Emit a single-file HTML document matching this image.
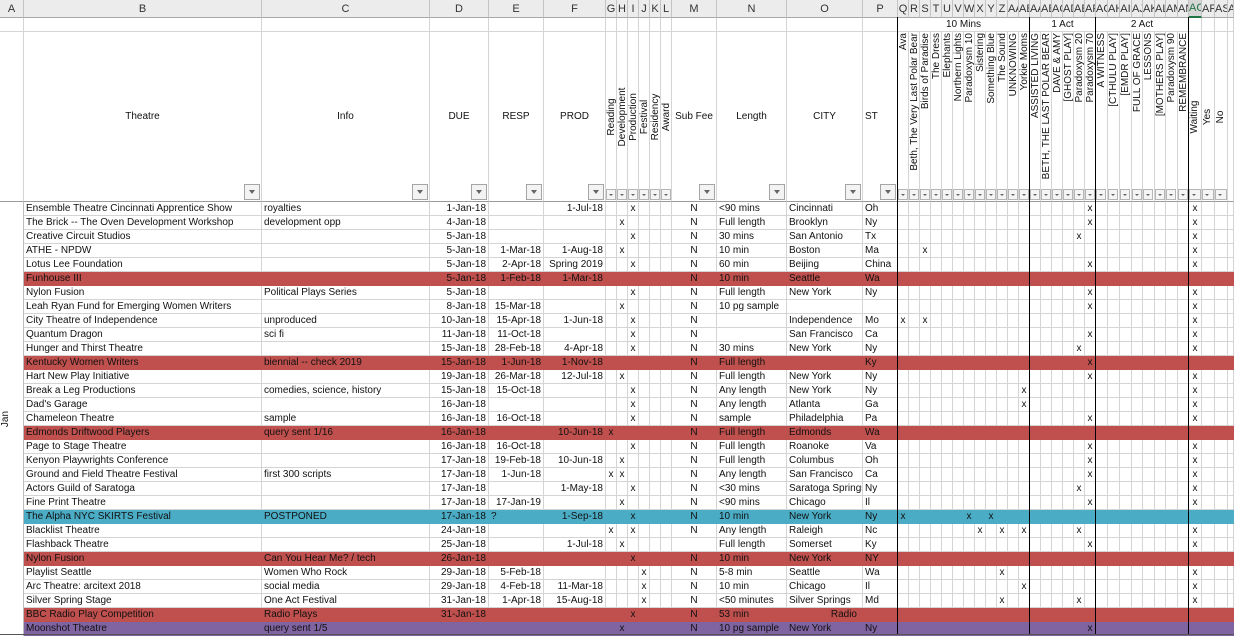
<!DOCTYPE html>
<html><head><meta charset="utf-8">
<style>
body{margin:0;width:1234px;height:638px;overflow:hidden;background:#fff;font-family:"Liberation Sans",Arial,sans-serif;position:relative}
table{border-collapse:separate;border-spacing:0;table-layout:fixed;width:1234px;position:absolute;top:0;left:0}
td{padding:0 2px;border-right:1px solid #d4d4d4;border-bottom:1px solid #d4d4d4;height:14px;white-space:nowrap;overflow:hidden;font-size:10px;line-height:13px;box-sizing:border-box;color:#111;position:relative}
tr.h td{height:17px;background:#ececec;border-right:1px solid #c4c4c4;border-bottom:1px solid #a8a8a8;text-align:center;font-size:11px;line-height:16px;color:#333;padding:0}
tr.h td.sel{background:#d6d6d6;color:#217346;border-bottom:2px solid #217346}
tr.t td{height:170px;text-align:center;vertical-align:middle;border-bottom:1px solid #9a9a9a}
td.n{padding:0;text-align:center}
td.r{text-align:right}
td.c{text-align:center}
tr.R td{background:#c0504d;border-color:#c0504d}
tr.B td{background:#4bacc6;border-color:#4bacc6}
tr.P td{background:#8064a2;border-color:#8064a2}
td.a{border-right:1px solid #bdbdbd;border-bottom:none;background:#fff!important}
.v{position:absolute;left:0;width:100%;writing-mode:vertical-rl;transform:rotate(180deg);font-size:10px;line-height:11px;white-space:nowrap;text-align:left}
.vt{top:1px}
.vm{top:50%;transform:translateY(-50%) rotate(180deg)}
.f{position:absolute;right:1px;bottom:1px;width:14px;height:14px;border:1px solid #a5a5a5;background:#f3f3f3}
.f:after{content:"";position:absolute;left:4px;top:5px;border-left:3px solid transparent;border-right:3px solid transparent;border-top:4px solid #666}
.s{position:absolute;left:0;bottom:1px;width:8px;height:9px;border:1px solid #b5b5b5;background:#f5f5f5}
.s:after{content:"";position:absolute;left:2px;top:4px;border-left:2px solid transparent;border-right:2px solid transparent;border-top:2px solid #666}
.bl{position:absolute;top:17px;height:618px;width:1px;background:#000}
</style></head><body>
<table>
<colgroup>
<col style="width:24px"><col style="width:238px"><col style="width:168px"><col style="width:59px"><col style="width:55px"><col style="width:62px">
<col style="width:11px"><col style="width:11px"><col style="width:11px"><col style="width:11px"><col style="width:11px"><col style="width:11px">
<col style="width:45px"><col style="width:70px"><col style="width:76px"><col style="width:35px">
<col style="width:11px"><col style="width:11px"><col style="width:11px"><col style="width:11px"><col style="width:11px"><col style="width:11px"><col style="width:11px"><col style="width:11px"><col style="width:11px"><col style="width:11px"><col style="width:11px"><col style="width:11px">
<col style="width:11px"><col style="width:11px"><col style="width:11px"><col style="width:11px"><col style="width:11px"><col style="width:11px">
<col style="width:12px"><col style="width:12px"><col style="width:12px"><col style="width:11px"><col style="width:12px"><col style="width:11px"><col style="width:12px"><col style="width:11px">
<col style="width:13px"><col style="width:13px"><col style="width:13px"><col style="width:6px">
</colgroup>
<tr class="h"><td>A</td><td>B</td><td>C</td><td>D</td><td>E</td><td>F</td><td>G</td><td>H</td><td>I</td><td>J</td><td>K</td><td>L</td><td>M</td><td>N</td><td>O</td><td>P</td><td>Q</td><td>R</td><td>S</td><td>T</td><td>U</td><td>V</td><td>W</td><td>X</td><td>Y</td><td>Z</td><td>AA</td><td>AB</td><td>AA</td><td>AB</td><td>AC</td><td>AD</td><td>AE</td><td>AF</td><td>AG</td><td>AH</td><td>AI</td><td>AJ</td><td>AK</td><td>AL</td><td>AM</td><td>AN</td><td class="sel">AC</td><td>AR</td><td>AS</td><td>AT</td></tr>
<tr><td></td><td></td><td></td><td></td><td></td><td></td><td></td><td></td><td></td><td></td><td></td><td></td><td></td><td></td><td></td><td></td><td colspan="12" class="c">10 Mins</td><td colspan="6" class="c">1 Act</td><td colspan="8" class="c">2 Act</td><td></td><td></td><td></td><td></td></tr>
<tr class="t"><td></td><td>Theatre<i class="f"></i></td><td>Info<i class="f"></i></td><td>DUE<i class="f"></i></td><td>RESP<i class="f"></i></td><td>PROD<i class="f"></i></td>
<td class="n"><div class="v vm">Reading</div><i class="s"></i></td><td class="n"><div class="v vm">Development</div><i class="s"></i></td><td class="n"><div class="v vm">Production</div><i class="s"></i></td><td class="n"><div class="v vm">Festival</div><i class="s"></i></td><td class="n"><div class="v vm">Residency</div><i class="s"></i></td><td class="n"><div class="v vm">Award</div><i class="s"></i></td>
<td>Sub Fee<i class="f"></i></td><td>Length<i class="f"></i></td><td>CITY<i class="f"></i></td><td style="text-align:left">ST<i class="f"></i></td>
<td class="n"><div class="v vt">Ava</div><i class="s"></i></td><td class="n"><div class="v vt">Beth, The Very Last Polar Bear</div><i class="s"></i></td><td class="n"><div class="v vt">Birds of Paradise</div><i class="s"></i></td><td class="n"><div class="v vt">The Dress</div><i class="s"></i></td><td class="n"><div class="v vt">Elephants</div><i class="s"></i></td><td class="n"><div class="v vt">Northern Lights</div><i class="s"></i></td><td class="n"><div class="v vt">Paradoxysm 10</div><i class="s"></i></td><td class="n"><div class="v vt">Sistering</div><i class="s"></i></td><td class="n"><div class="v vt">Something Blue</div><i class="s"></i></td><td class="n"><div class="v vt">The Sound</div><i class="s"></i></td><td class="n"><div class="v vt">UNKNOWING</div><i class="s"></i></td><td class="n"><div class="v vt">Yorkie Moms</div><i class="s"></i></td>
<td class="n"><div class="v vt">ASSISTED LIVING</div><i class="s"></i></td><td class="n"><div class="v vt">BETH, THE LAST POLAR BEAR</div><i class="s"></i></td><td class="n"><div class="v vt">DAVE &amp; AMY</div><i class="s"></i></td><td class="n"><div class="v vt">[GHOST PLAY]</div><i class="s"></i></td><td class="n"><div class="v vt">Paradoxysm 20</div><i class="s"></i></td><td class="n"><div class="v vt">Paradoxysm 70</div><i class="s"></i></td>
<td class="n"><div class="v vt">A WITNESS</div><i class="s"></i></td><td class="n"><div class="v vt">[CTHULU PLAY]</div><i class="s"></i></td><td class="n"><div class="v vt">[EMDR PLAY]</div><i class="s"></i></td><td class="n"><div class="v vt">FULL OF GRACE</div><i class="s"></i></td><td class="n"><div class="v vt">LESSONS</div><i class="s"></i></td><td class="n"><div class="v vt">[MOTHERS PLAY]</div><i class="s"></i></td><td class="n"><div class="v vt">Paradoxysm 90</div><i class="s"></i></td><td class="n"><div class="v vt">REMEMBRANCE</div><i class="s"></i></td>
<td class="n"><div class="v vm">Waiting</div><i class="s" style="width:10px"></i></td><td class="n"><div class="v vm">Yes</div><i class="s" style="width:10px"></i></td><td class="n"><div class="v vm">No</div><i class="s" style="width:10px"></i></td><td></td></tr>

<tr><td class="a" rowspan="31"><div class="v vm" style="font-size:10px">Jan</div></td><td>Ensemble Theatre Cincinnati Apprentice Show</td><td>royalties</td><td class="r">1-Jan-18</td><td class="r"></td><td class="r">1-Jul-18</td><td class="n"></td><td class="n"></td><td class="n">x</td><td class="n"></td><td class="n"></td><td class="n"></td><td class="c">N</td><td>&lt;90 mins</td><td>Cincinnati</td><td>Oh</td><td></td><td></td><td></td><td></td><td></td><td></td><td></td><td></td><td></td><td></td><td></td><td></td><td></td><td></td><td></td><td></td><td></td><td class="n">x</td><td></td><td></td><td></td><td></td><td></td><td></td><td></td><td></td><td class="n">x</td><td></td><td></td><td></td></tr>
<tr><td>The Brick -- The Oven Development Workshop</td><td>development opp</td><td class="r">4-Jan-18</td><td class="r"></td><td class="r"></td><td class="n"></td><td class="n">x</td><td class="n"></td><td class="n"></td><td class="n"></td><td class="n"></td><td class="c">N</td><td>Full length</td><td>Brooklyn</td><td>Ny</td><td></td><td></td><td></td><td></td><td></td><td></td><td></td><td></td><td></td><td></td><td></td><td></td><td></td><td></td><td></td><td></td><td></td><td class="n">x</td><td></td><td></td><td></td><td></td><td></td><td></td><td></td><td></td><td class="n">x</td><td></td><td></td><td></td></tr>
<tr><td>Creative Circuit Studios</td><td></td><td class="r">5-Jan-18</td><td class="r"></td><td class="r"></td><td class="n"></td><td class="n"></td><td class="n">x</td><td class="n"></td><td class="n"></td><td class="n"></td><td class="c">N</td><td>30 mins</td><td>San Antonio</td><td>Tx</td><td></td><td></td><td></td><td></td><td></td><td></td><td></td><td></td><td></td><td></td><td></td><td></td><td></td><td></td><td></td><td></td><td class="n">x</td><td></td><td></td><td></td><td></td><td></td><td></td><td></td><td></td><td></td><td class="n">x</td><td></td><td></td><td></td></tr>
<tr><td>ATHE - NPDW</td><td></td><td class="r">5-Jan-18</td><td class="r">1-Mar-18</td><td class="r">1-Aug-18</td><td class="n"></td><td class="n">x</td><td class="n"></td><td class="n"></td><td class="n"></td><td class="n"></td><td class="c">N</td><td>10 min</td><td>Boston</td><td>Ma</td><td></td><td></td><td class="n">x</td><td></td><td></td><td></td><td></td><td></td><td></td><td></td><td></td><td></td><td></td><td></td><td></td><td></td><td></td><td></td><td></td><td></td><td></td><td></td><td></td><td></td><td></td><td></td><td class="n">x</td><td></td><td></td><td></td></tr>
<tr><td>Lotus Lee Foundation</td><td></td><td class="r">5-Jan-18</td><td class="r">2-Apr-18</td><td class="r">Spring 2019</td><td class="n"></td><td class="n"></td><td class="n">x</td><td class="n"></td><td class="n"></td><td class="n"></td><td class="c">N</td><td>60 min</td><td>Beijing</td><td>China</td><td></td><td></td><td></td><td></td><td></td><td></td><td></td><td></td><td></td><td></td><td></td><td></td><td></td><td></td><td></td><td></td><td></td><td class="n">x</td><td></td><td></td><td></td><td></td><td></td><td></td><td></td><td></td><td class="n">x</td><td></td><td></td><td></td></tr>
<tr class="R"><td>Funhouse III</td><td></td><td class="r">5-Jan-18</td><td class="r">1-Feb-18</td><td class="r">1-Mar-18</td><td class="n"></td><td class="n"></td><td class="n"></td><td class="n"></td><td class="n"></td><td class="n"></td><td class="c">N</td><td>10 min</td><td>Seattle</td><td>Wa</td><td></td><td></td><td></td><td></td><td></td><td></td><td></td><td></td><td></td><td></td><td></td><td></td><td></td><td></td><td></td><td></td><td></td><td></td><td></td><td></td><td></td><td></td><td></td><td></td><td></td><td></td><td></td><td></td><td></td><td></td></tr>
<tr><td>Nylon Fusion</td><td>Political Plays Series</td><td class="r">5-Jan-18</td><td class="r"></td><td class="r"></td><td class="n"></td><td class="n"></td><td class="n">x</td><td class="n"></td><td class="n"></td><td class="n"></td><td class="c">N</td><td>Full length</td><td>New York</td><td>Ny</td><td></td><td></td><td></td><td></td><td></td><td></td><td></td><td></td><td></td><td></td><td></td><td></td><td></td><td></td><td></td><td></td><td></td><td class="n">x</td><td></td><td></td><td></td><td></td><td></td><td></td><td></td><td></td><td class="n">x</td><td></td><td></td><td></td></tr>
<tr><td>Leah Ryan Fund for Emerging Women Writers</td><td></td><td class="r">8-Jan-18</td><td class="r">15-Mar-18</td><td class="r"></td><td class="n"></td><td class="n">x</td><td class="n"></td><td class="n"></td><td class="n"></td><td class="n"></td><td class="c">N</td><td>10 pg sample</td><td></td><td></td><td></td><td></td><td></td><td></td><td></td><td></td><td></td><td></td><td></td><td></td><td></td><td></td><td></td><td></td><td></td><td></td><td></td><td class="n">x</td><td></td><td></td><td></td><td></td><td></td><td></td><td></td><td></td><td class="n">x</td><td></td><td></td><td></td></tr>
<tr><td>City Theatre of Independence</td><td>unproduced</td><td class="r">10-Jan-18</td><td class="r">15-Apr-18</td><td class="r">1-Jun-18</td><td class="n"></td><td class="n"></td><td class="n">x</td><td class="n"></td><td class="n"></td><td class="n"></td><td class="c">N</td><td></td><td>Independence</td><td>Mo</td><td class="n">x</td><td></td><td class="n">x</td><td></td><td></td><td></td><td></td><td></td><td></td><td></td><td></td><td></td><td></td><td></td><td></td><td></td><td></td><td></td><td></td><td></td><td></td><td></td><td></td><td></td><td></td><td></td><td class="n">x</td><td></td><td></td><td></td></tr>
<tr><td>Quantum Dragon</td><td>sci fi</td><td class="r">11-Jan-18</td><td class="r">11-Oct-18</td><td class="r"></td><td class="n"></td><td class="n"></td><td class="n">x</td><td class="n"></td><td class="n"></td><td class="n"></td><td class="c">N</td><td></td><td>San Francisco</td><td>Ca</td><td></td><td></td><td></td><td></td><td></td><td></td><td></td><td></td><td></td><td></td><td></td><td></td><td></td><td></td><td></td><td></td><td></td><td class="n">x</td><td></td><td></td><td></td><td></td><td></td><td></td><td></td><td></td><td class="n">x</td><td></td><td></td><td></td></tr>
<tr><td>Hunger and Thirst Theatre</td><td></td><td class="r">15-Jan-18</td><td class="r">28-Feb-18</td><td class="r">4-Apr-18</td><td class="n"></td><td class="n"></td><td class="n">x</td><td class="n"></td><td class="n"></td><td class="n"></td><td class="c">N</td><td>30 mins</td><td>New York</td><td>Ny</td><td></td><td></td><td></td><td></td><td></td><td></td><td></td><td></td><td></td><td></td><td></td><td></td><td></td><td></td><td></td><td></td><td class="n">x</td><td></td><td></td><td></td><td></td><td></td><td></td><td></td><td></td><td></td><td class="n">x</td><td></td><td></td><td></td></tr>
<tr class="R"><td>Kentucky Women Writers</td><td>biennial -- check 2019</td><td class="r">15-Jan-18</td><td class="r">1-Jun-18</td><td class="r">1-Nov-18</td><td class="n"></td><td class="n"></td><td class="n"></td><td class="n"></td><td class="n"></td><td class="n"></td><td class="c">N</td><td>Full length</td><td></td><td>Ky</td><td></td><td></td><td></td><td></td><td></td><td></td><td></td><td></td><td></td><td></td><td></td><td></td><td></td><td></td><td></td><td></td><td></td><td class="n">x</td><td></td><td></td><td></td><td></td><td></td><td></td><td></td><td></td><td></td><td></td><td></td><td></td></tr>
<tr><td>Hart New Play Initiative</td><td></td><td class="r">19-Jan-18</td><td class="r">26-Mar-18</td><td class="r">12-Jul-18</td><td class="n"></td><td class="n">x</td><td class="n"></td><td class="n"></td><td class="n"></td><td class="n"></td><td class="c">N</td><td>Full length</td><td>New York</td><td>Ny</td><td></td><td></td><td></td><td></td><td></td><td></td><td></td><td></td><td></td><td></td><td></td><td></td><td></td><td></td><td></td><td></td><td></td><td class="n">x</td><td></td><td></td><td></td><td></td><td></td><td></td><td></td><td></td><td class="n">x</td><td></td><td></td><td></td></tr>
<tr><td>Break a Leg Productions</td><td>comedies, science, history</td><td class="r">15-Jan-18</td><td class="r">15-Oct-18</td><td class="r"></td><td class="n"></td><td class="n"></td><td class="n">x</td><td class="n"></td><td class="n"></td><td class="n"></td><td class="c">N</td><td>Any length</td><td>New York</td><td>Ny</td><td></td><td></td><td></td><td></td><td></td><td></td><td></td><td></td><td></td><td></td><td></td><td class="n">x</td><td></td><td></td><td></td><td></td><td></td><td></td><td></td><td></td><td></td><td></td><td></td><td></td><td></td><td></td><td class="n">x</td><td></td><td></td><td></td></tr>
<tr><td>Dad's Garage</td><td></td><td class="r">16-Jan-18</td><td class="r"></td><td class="r"></td><td class="n"></td><td class="n"></td><td class="n">x</td><td class="n"></td><td class="n"></td><td class="n"></td><td class="c">N</td><td>Any length</td><td>Atlanta</td><td>Ga</td><td></td><td></td><td></td><td></td><td></td><td></td><td></td><td></td><td></td><td></td><td></td><td class="n">x</td><td></td><td></td><td></td><td></td><td></td><td></td><td></td><td></td><td></td><td></td><td></td><td></td><td></td><td></td><td class="n">x</td><td></td><td></td><td></td></tr>
<tr><td>Chameleon Theatre</td><td>sample</td><td class="r">16-Jan-18</td><td class="r">16-Oct-18</td><td class="r"></td><td class="n"></td><td class="n"></td><td class="n">x</td><td class="n"></td><td class="n"></td><td class="n"></td><td class="c">N</td><td>sample</td><td>Philadelphia</td><td>Pa</td><td></td><td></td><td></td><td></td><td></td><td></td><td></td><td></td><td></td><td></td><td></td><td></td><td></td><td></td><td></td><td></td><td></td><td class="n">x</td><td></td><td></td><td></td><td></td><td></td><td></td><td></td><td></td><td class="n">x</td><td></td><td></td><td></td></tr>
<tr class="R"><td>Edmonds Driftwood Players</td><td>query sent 1/16</td><td class="r">16-Jan-18</td><td class="r"></td><td class="r">10-Jun-18</td><td class="n">x</td><td class="n"></td><td class="n"></td><td class="n"></td><td class="n"></td><td class="n"></td><td class="c">N</td><td>Full length</td><td>Edmonds</td><td>Wa</td><td></td><td></td><td></td><td></td><td></td><td></td><td></td><td></td><td></td><td></td><td></td><td></td><td></td><td></td><td></td><td></td><td></td><td></td><td></td><td></td><td></td><td></td><td></td><td></td><td></td><td></td><td></td><td></td><td></td><td></td></tr>
<tr><td>Page to Stage Theatre</td><td></td><td class="r">16-Jan-18</td><td class="r">16-Oct-18</td><td class="r"></td><td class="n"></td><td class="n"></td><td class="n">x</td><td class="n"></td><td class="n"></td><td class="n"></td><td class="c">N</td><td>Full length</td><td>Roanoke</td><td>Va</td><td></td><td></td><td></td><td></td><td></td><td></td><td></td><td></td><td></td><td></td><td></td><td></td><td></td><td></td><td></td><td></td><td></td><td class="n">x</td><td></td><td></td><td></td><td></td><td></td><td></td><td></td><td></td><td class="n">x</td><td></td><td></td><td></td></tr>
<tr><td>Kenyon Playwrights Conference</td><td></td><td class="r">17-Jan-18</td><td class="r">19-Feb-18</td><td class="r">10-Jun-18</td><td class="n"></td><td class="n">x</td><td class="n"></td><td class="n"></td><td class="n"></td><td class="n"></td><td class="c">N</td><td>Full length</td><td>Columbus</td><td>Oh</td><td></td><td></td><td></td><td></td><td></td><td></td><td></td><td></td><td></td><td></td><td></td><td></td><td></td><td></td><td></td><td></td><td></td><td class="n">x</td><td></td><td></td><td></td><td></td><td></td><td></td><td></td><td></td><td class="n">x</td><td></td><td></td><td></td></tr>
<tr><td>Ground and Field Theatre Festival</td><td>first 300 scripts</td><td class="r">17-Jan-18</td><td class="r">1-Jun-18</td><td class="r"></td><td class="n">x</td><td class="n">x</td><td class="n"></td><td class="n"></td><td class="n"></td><td class="n"></td><td class="c">N</td><td>Any length</td><td>San Francisco</td><td>Ca</td><td></td><td></td><td></td><td></td><td></td><td></td><td></td><td></td><td></td><td></td><td></td><td></td><td></td><td></td><td></td><td></td><td></td><td class="n">x</td><td></td><td></td><td></td><td></td><td></td><td></td><td></td><td></td><td class="n">x</td><td></td><td></td><td></td></tr>
<tr><td>Actors Guild of Saratoga</td><td></td><td class="r">17-Jan-18</td><td class="r"></td><td class="r">1-May-18</td><td class="n"></td><td class="n"></td><td class="n">x</td><td class="n"></td><td class="n"></td><td class="n"></td><td class="c">N</td><td>&lt;30 mins</td><td>Saratoga Springs</td><td>Ny</td><td></td><td></td><td></td><td></td><td></td><td></td><td></td><td></td><td></td><td></td><td></td><td></td><td></td><td></td><td></td><td></td><td class="n">x</td><td></td><td></td><td></td><td></td><td></td><td></td><td></td><td></td><td></td><td class="n">x</td><td></td><td></td><td></td></tr>
<tr><td>Fine Print Theatre</td><td></td><td class="r">17-Jan-18</td><td class="r">17-Jan-19</td><td class="r"></td><td class="n"></td><td class="n">x</td><td class="n"></td><td class="n"></td><td class="n"></td><td class="n"></td><td class="c">N</td><td>&lt;90 mins</td><td>Chicago</td><td>Il</td><td></td><td></td><td></td><td></td><td></td><td></td><td></td><td></td><td></td><td></td><td></td><td></td><td></td><td></td><td></td><td></td><td></td><td class="n">x</td><td></td><td></td><td></td><td></td><td></td><td></td><td></td><td></td><td class="n">x</td><td></td><td></td><td></td></tr>
<tr class="B"><td>The Alpha NYC SKIRTS Festival</td><td>POSTPONED</td><td class="r">17-Jan-18</td><td>?</td><td class="r">1-Sep-18</td><td class="n"></td><td class="n"></td><td class="n">x</td><td class="n"></td><td class="n"></td><td class="n"></td><td class="c">N</td><td>10 min</td><td>New York</td><td>Ny</td><td class="n">x</td><td></td><td></td><td></td><td></td><td></td><td class="n">x</td><td></td><td class="n">x</td><td></td><td></td><td></td><td></td><td></td><td></td><td></td><td></td><td></td><td></td><td></td><td></td><td></td><td></td><td></td><td></td><td></td><td></td><td></td><td></td><td></td></tr>
<tr><td>Blacklist Theatre</td><td></td><td class="r">24-Jan-18</td><td class="r"></td><td class="r"></td><td class="n">x</td><td class="n"></td><td class="n">x</td><td class="n"></td><td class="n"></td><td class="n"></td><td class="c">N</td><td>Any length</td><td>Raleigh</td><td>Nc</td><td></td><td></td><td></td><td></td><td></td><td></td><td></td><td class="n">x</td><td></td><td class="n">x</td><td></td><td class="n">x</td><td></td><td></td><td></td><td></td><td class="n">x</td><td></td><td></td><td></td><td></td><td></td><td></td><td></td><td></td><td></td><td class="n">x</td><td></td><td></td><td></td></tr>
<tr><td>Flashback Theatre</td><td></td><td class="r">25-Jan-18</td><td class="r"></td><td class="r">1-Jul-18</td><td class="n"></td><td class="n">x</td><td class="n"></td><td class="n"></td><td class="n"></td><td class="n"></td><td class="c"></td><td>Full length</td><td>Somerset</td><td>Ky</td><td></td><td></td><td></td><td></td><td></td><td></td><td></td><td></td><td></td><td></td><td></td><td></td><td></td><td></td><td></td><td></td><td></td><td class="n">x</td><td></td><td></td><td></td><td></td><td></td><td></td><td></td><td></td><td class="n">x</td><td></td><td></td><td></td></tr>
<tr class="R"><td>Nylon Fusion</td><td>Can You Hear Me? / tech</td><td class="r">26-Jan-18</td><td class="r"></td><td class="r"></td><td class="n"></td><td class="n"></td><td class="n">x</td><td class="n"></td><td class="n"></td><td class="n"></td><td class="c">N</td><td>10 min</td><td>New York</td><td>NY</td><td></td><td></td><td></td><td></td><td></td><td></td><td></td><td></td><td></td><td></td><td></td><td></td><td></td><td></td><td></td><td></td><td></td><td></td><td></td><td></td><td></td><td></td><td></td><td></td><td></td><td></td><td></td><td></td><td></td><td></td></tr>
<tr><td>Playlist Seattle</td><td>Women Who Rock</td><td class="r">29-Jan-18</td><td class="r">5-Feb-18</td><td class="r"></td><td class="n"></td><td class="n"></td><td class="n"></td><td class="n">x</td><td class="n"></td><td class="n"></td><td class="c">N</td><td>5-8 min</td><td>Seattle</td><td>Wa</td><td></td><td></td><td></td><td></td><td></td><td></td><td></td><td></td><td></td><td class="n">x</td><td></td><td></td><td></td><td></td><td></td><td></td><td></td><td></td><td></td><td></td><td></td><td></td><td></td><td></td><td></td><td></td><td class="n">x</td><td></td><td></td><td></td></tr>
<tr><td>Arc Theatre: arcitext 2018</td><td>social media</td><td class="r">29-Jan-18</td><td class="r">4-Feb-18</td><td class="r">11-Mar-18</td><td class="n"></td><td class="n"></td><td class="n"></td><td class="n">x</td><td class="n"></td><td class="n"></td><td class="c">N</td><td>10 min</td><td>Chicago</td><td>Il</td><td></td><td></td><td></td><td></td><td></td><td></td><td></td><td></td><td></td><td></td><td></td><td class="n">x</td><td></td><td></td><td></td><td></td><td></td><td></td><td></td><td></td><td></td><td></td><td></td><td></td><td></td><td></td><td class="n">x</td><td></td><td></td><td></td></tr>
<tr><td>Silver Spring Stage</td><td>One Act Festival</td><td class="r">31-Jan-18</td><td class="r">1-Apr-18</td><td class="r">15-Aug-18</td><td class="n"></td><td class="n"></td><td class="n"></td><td class="n">x</td><td class="n"></td><td class="n"></td><td class="c">N</td><td>&lt;50 minutes</td><td>Silver Springs</td><td>Md</td><td></td><td></td><td></td><td></td><td></td><td></td><td></td><td></td><td></td><td class="n">x</td><td></td><td></td><td></td><td></td><td></td><td></td><td class="n">x</td><td></td><td></td><td></td><td></td><td></td><td></td><td></td><td></td><td></td><td class="n">x</td><td></td><td></td><td></td></tr>
<tr class="R"><td>BBC Radio Play Competition</td><td>Radio Plays</td><td class="r">31-Jan-18</td><td class="r"></td><td class="r"></td><td class="n"></td><td class="n"></td><td class="n">x</td><td class="n"></td><td class="n"></td><td class="n"></td><td class="c">N</td><td>53 min</td><td class="r" style="padding-right:5px">Radio</td><td></td><td></td><td></td><td></td><td></td><td></td><td></td><td></td><td></td><td></td><td></td><td></td><td></td><td></td><td></td><td></td><td></td><td></td><td></td><td></td><td></td><td></td><td></td><td></td><td></td><td></td><td></td><td></td><td></td><td></td><td></td></tr>
<tr class="P"><td>Moonshot Theatre</td><td>query sent 1/5</td><td class="r"></td><td class="r"></td><td class="r"></td><td class="n"></td><td class="n">x</td><td class="n"></td><td class="n"></td><td class="n"></td><td class="n"></td><td class="c">N</td><td>10 pg sample</td><td>New York</td><td>Ny</td><td></td><td></td><td></td><td></td><td></td><td></td><td></td><td></td><td></td><td></td><td></td><td></td><td></td><td></td><td></td><td></td><td></td><td class="n">x</td><td></td><td></td><td></td><td></td><td></td><td></td><td></td><td></td><td></td><td></td><td></td><td></td></tr>
</table>
<div class="bl" style="left:897px"></div>
<div class="bl" style="left:1029px"></div>
<div class="bl" style="left:1095px"></div>
<div class="bl" style="left:1188px"></div>
<div style="position:absolute;left:0;top:634px;width:1234px;height:1px;background:#555"></div>
</body></html>
